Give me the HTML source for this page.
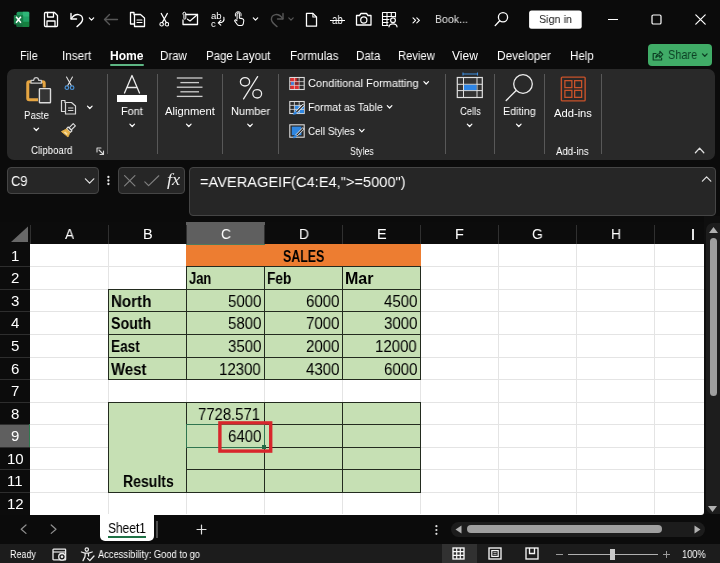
<!DOCTYPE html>
<html><head><meta charset="utf-8"><title>Excel</title>
<style>
html,body{margin:0;padding:0;}
html{width:720px;height:563px;overflow:hidden;background:#0b0b0b;}
body{width:720px;height:563px;overflow:hidden;background:#0b0b0b;position:relative;font-family:"Liberation Sans",sans-serif;}
.t{position:absolute;white-space:nowrap;transform-origin:0 50%;display:block;will-change:transform;}
.r{position:absolute;box-sizing:border-box;display:block;}
</style></head><body>
<div class="r" style="left:30px;top:244px;width:674px;height:271px;background:#ffffff;border-bottom-right-radius:3px;"></div>
<div class="r" style="left:108px;top:244px;width:1px;height:270px;background:#e4e4e4;"></div>
<div class="r" style="left:186px;top:244px;width:1px;height:270px;background:#e4e4e4;"></div>
<div class="r" style="left:264px;top:244px;width:1px;height:270px;background:#e4e4e4;"></div>
<div class="r" style="left:342px;top:244px;width:1px;height:270px;background:#e4e4e4;"></div>
<div class="r" style="left:420px;top:244px;width:1px;height:270px;background:#e4e4e4;"></div>
<div class="r" style="left:498px;top:244px;width:1px;height:270px;background:#e4e4e4;"></div>
<div class="r" style="left:576px;top:244px;width:1px;height:270px;background:#e4e4e4;"></div>
<div class="r" style="left:654px;top:244px;width:1px;height:270px;background:#e4e4e4;"></div>
<div class="r" style="left:30px;top:266px;width:674px;height:1px;background:#e4e4e4;"></div>
<div class="r" style="left:30px;top:289px;width:674px;height:1px;background:#e4e4e4;"></div>
<div class="r" style="left:30px;top:311px;width:674px;height:1px;background:#e4e4e4;"></div>
<div class="r" style="left:30px;top:334px;width:674px;height:1px;background:#e4e4e4;"></div>
<div class="r" style="left:30px;top:357px;width:674px;height:1px;background:#e4e4e4;"></div>
<div class="r" style="left:30px;top:379px;width:674px;height:1px;background:#e4e4e4;"></div>
<div class="r" style="left:30px;top:402px;width:674px;height:1px;background:#e4e4e4;"></div>
<div class="r" style="left:30px;top:424px;width:674px;height:1px;background:#e4e4e4;"></div>
<div class="r" style="left:30px;top:447px;width:674px;height:1px;background:#e4e4e4;"></div>
<div class="r" style="left:30px;top:469px;width:674px;height:1px;background:#e4e4e4;"></div>
<div class="r" style="left:30px;top:492px;width:674px;height:1px;background:#e4e4e4;"></div>
<div class="r" style="left:0px;top:222px;width:704px;height:22px;background:#0c0c0c;"></div>
<div class="r" style="left:0px;top:244px;width:30px;height:271px;background:#0c0c0c;"></div>
<div class="r" style="left:186px;top:222px;width:79px;height:22px;background:#5f5f5f;"></div>
<div class="r" style="left:0px;top:424px;width:30px;height:23px;background:#5f5f5f;"></div>
<div class="r" style="left:30px;top:225px;width:1px;height:19px;background:#303030;"></div>
<div class="r" style="left:108px;top:225px;width:1px;height:19px;background:#303030;"></div>
<div class="r" style="left:186px;top:225px;width:1px;height:19px;background:#303030;"></div>
<div class="r" style="left:264px;top:225px;width:1px;height:19px;background:#303030;"></div>
<div class="r" style="left:342px;top:225px;width:1px;height:19px;background:#303030;"></div>
<div class="r" style="left:420px;top:225px;width:1px;height:19px;background:#303030;"></div>
<div class="r" style="left:498px;top:225px;width:1px;height:19px;background:#303030;"></div>
<div class="r" style="left:576px;top:225px;width:1px;height:19px;background:#303030;"></div>
<div class="r" style="left:654px;top:225px;width:1px;height:19px;background:#303030;"></div>
<div class="r" style="left:0px;top:266px;width:30px;height:1px;background:#2e2e2e;"></div>
<div class="r" style="left:0px;top:289px;width:30px;height:1px;background:#2e2e2e;"></div>
<div class="r" style="left:0px;top:311px;width:30px;height:1px;background:#2e2e2e;"></div>
<div class="r" style="left:0px;top:334px;width:30px;height:1px;background:#2e2e2e;"></div>
<div class="r" style="left:0px;top:357px;width:30px;height:1px;background:#2e2e2e;"></div>
<div class="r" style="left:0px;top:379px;width:30px;height:1px;background:#2e2e2e;"></div>
<div class="r" style="left:0px;top:402px;width:30px;height:1px;background:#2e2e2e;"></div>
<div class="r" style="left:0px;top:424px;width:30px;height:1px;background:#2e2e2e;"></div>
<div class="r" style="left:0px;top:447px;width:30px;height:1px;background:#2e2e2e;"></div>
<div class="r" style="left:0px;top:469px;width:30px;height:1px;background:#2e2e2e;"></div>
<div class="r" style="left:0px;top:492px;width:30px;height:1px;background:#2e2e2e;"></div>
<div class="r" style="left:29px;top:424px;width:1px;height:23px;background:#2f7a50;"></div>
<svg class="r" style="left:10px;top:226px" width="19" height="17" viewBox="0 0 19 17"><path d="M18 0.5 L18 16 L1 16 Z" fill="#686868"/></svg>
<span class="t" style="left:64.91px;top:226.75px;font-size:14.5px;line-height:14.5px;color:#ffffff;transform:scaleX(0.9424);">A</span>
<span class="t" style="left:142.91px;top:226.75px;font-size:14.5px;line-height:14.5px;color:#ffffff;transform:scaleX(0.9546);">B</span>
<span class="t" style="left:220.53px;top:226.75px;font-size:14.5px;line-height:14.5px;color:#ffffff;transform:scaleX(0.9473);">C</span>
<span class="t" style="left:298.53px;top:226.75px;font-size:14.5px;line-height:14.5px;color:#ffffff;transform:scaleX(0.9473);">D</span>
<span class="t" style="left:376.91px;top:226.75px;font-size:14.5px;line-height:14.5px;color:#ffffff;transform:scaleX(0.9546);">E</span>
<span class="t" style="left:455.29px;top:226.75px;font-size:14.5px;line-height:14.5px;color:#ffffff;transform:scaleX(0.9481);">F</span>
<span class="t" style="left:532.14px;top:226.75px;font-size:14.5px;line-height:14.5px;color:#ffffff;transform:scaleX(0.9525);">G</span>
<span class="t" style="left:610.53px;top:226.75px;font-size:14.5px;line-height:14.5px;color:#ffffff;transform:scaleX(0.9473);">H</span>
<div class="r" style="left:692px;top:229px;width:2px;height:11px;background:#e4e4e4;"></div>
<span class="t" style="left:10.83px;top:248.00px;font-size:15px;line-height:15px;color:#ffffff;">1</span>
<span class="t" style="left:10.83px;top:270.00px;font-size:15px;line-height:15px;color:#ffffff;">2</span>
<span class="t" style="left:10.83px;top:293.00px;font-size:15px;line-height:15px;color:#ffffff;">3</span>
<span class="t" style="left:10.83px;top:315.00px;font-size:15px;line-height:15px;color:#ffffff;">4</span>
<span class="t" style="left:10.83px;top:338.00px;font-size:15px;line-height:15px;color:#ffffff;">5</span>
<span class="t" style="left:10.83px;top:361.00px;font-size:15px;line-height:15px;color:#ffffff;">6</span>
<span class="t" style="left:10.83px;top:383.00px;font-size:15px;line-height:15px;color:#ffffff;">7</span>
<span class="t" style="left:10.83px;top:406.00px;font-size:15px;line-height:15px;color:#ffffff;">8</span>
<span class="t" style="left:10.83px;top:428.00px;font-size:15px;line-height:15px;color:#ffffff;">9</span>
<span class="t" style="left:6.66px;top:451.00px;font-size:15px;line-height:15px;color:#ffffff;">10</span>
<span class="t" style="left:7.21px;top:473.00px;font-size:15px;line-height:15px;color:#ffffff;">11</span>
<span class="t" style="left:6.66px;top:496.00px;font-size:15px;line-height:15px;color:#ffffff;">12</span>
<div class="r" style="left:186px;top:244px;width:235px;height:22px;background:#ed7d31;"></div>
<div class="r" style="left:186px;top:244px;width:79px;height:1px;background:#4f7a5e;"></div>
<div class="r" style="left:186px;top:266px;width:79px;height:24px;background:#c6e0b4;border:1px solid #232b1f;"></div>
<div class="r" style="left:264px;top:266px;width:79px;height:24px;background:#c6e0b4;border:1px solid #232b1f;"></div>
<div class="r" style="left:342px;top:266px;width:79px;height:24px;background:#c6e0b4;border:1px solid #232b1f;"></div>
<div class="r" style="left:108px;top:289px;width:79px;height:23px;background:#c6e0b4;border:1px solid #232b1f;"></div>
<div class="r" style="left:186px;top:289px;width:79px;height:23px;background:#c6e0b4;border:1px solid #232b1f;"></div>
<div class="r" style="left:264px;top:289px;width:79px;height:23px;background:#c6e0b4;border:1px solid #232b1f;"></div>
<div class="r" style="left:342px;top:289px;width:79px;height:23px;background:#c6e0b4;border:1px solid #232b1f;"></div>
<div class="r" style="left:108px;top:311px;width:79px;height:24px;background:#c6e0b4;border:1px solid #232b1f;"></div>
<div class="r" style="left:186px;top:311px;width:79px;height:24px;background:#c6e0b4;border:1px solid #232b1f;"></div>
<div class="r" style="left:264px;top:311px;width:79px;height:24px;background:#c6e0b4;border:1px solid #232b1f;"></div>
<div class="r" style="left:342px;top:311px;width:79px;height:24px;background:#c6e0b4;border:1px solid #232b1f;"></div>
<div class="r" style="left:108px;top:334px;width:79px;height:24px;background:#c6e0b4;border:1px solid #232b1f;"></div>
<div class="r" style="left:186px;top:334px;width:79px;height:24px;background:#c6e0b4;border:1px solid #232b1f;"></div>
<div class="r" style="left:264px;top:334px;width:79px;height:24px;background:#c6e0b4;border:1px solid #232b1f;"></div>
<div class="r" style="left:342px;top:334px;width:79px;height:24px;background:#c6e0b4;border:1px solid #232b1f;"></div>
<div class="r" style="left:108px;top:357px;width:79px;height:23px;background:#c6e0b4;border:1px solid #232b1f;"></div>
<div class="r" style="left:186px;top:357px;width:79px;height:23px;background:#c6e0b4;border:1px solid #232b1f;"></div>
<div class="r" style="left:264px;top:357px;width:79px;height:23px;background:#c6e0b4;border:1px solid #232b1f;"></div>
<div class="r" style="left:342px;top:357px;width:79px;height:23px;background:#c6e0b4;border:1px solid #232b1f;"></div>
<div class="r" style="left:108px;top:402px;width:79px;height:91px;background:#c6e0b4;border:1px solid #232b1f;"></div>
<div class="r" style="left:186px;top:402px;width:79px;height:23px;background:#c6e0b4;border:1px solid #232b1f;"></div>
<div class="r" style="left:264px;top:402px;width:79px;height:23px;background:#c6e0b4;border:1px solid #232b1f;"></div>
<div class="r" style="left:342px;top:402px;width:79px;height:23px;background:#c6e0b4;border:1px solid #232b1f;"></div>
<div class="r" style="left:186px;top:424px;width:79px;height:24px;background:#c6e0b4;border:1px solid #232b1f;"></div>
<div class="r" style="left:264px;top:424px;width:79px;height:24px;background:#c6e0b4;border:1px solid #232b1f;"></div>
<div class="r" style="left:342px;top:424px;width:79px;height:24px;background:#c6e0b4;border:1px solid #232b1f;"></div>
<div class="r" style="left:186px;top:447px;width:79px;height:23px;background:#c6e0b4;border:1px solid #232b1f;"></div>
<div class="r" style="left:264px;top:447px;width:79px;height:23px;background:#c6e0b4;border:1px solid #232b1f;"></div>
<div class="r" style="left:342px;top:447px;width:79px;height:23px;background:#c6e0b4;border:1px solid #232b1f;"></div>
<div class="r" style="left:186px;top:469px;width:79px;height:24px;background:#c6e0b4;border:1px solid #232b1f;"></div>
<div class="r" style="left:264px;top:469px;width:79px;height:24px;background:#c6e0b4;border:1px solid #232b1f;"></div>
<div class="r" style="left:342px;top:469px;width:79px;height:24px;background:#c6e0b4;border:1px solid #232b1f;"></div>
<span class="t" style="left:283.00px;top:248.50px;font-size:16px;line-height:16px;color:#000;font-weight:bold;transform:scaleX(0.7738);">SALES</span>
<span class="t" style="left:189.20px;top:270.50px;font-size:16px;line-height:16px;color:#000;font-weight:bold;transform:scaleX(0.8072);">Jan</span>
<span class="t" style="left:267.20px;top:270.50px;font-size:16px;line-height:16px;color:#000;font-weight:bold;transform:scaleX(0.8526);">Feb</span>
<span class="t" style="left:345.20px;top:270.50px;font-size:16px;line-height:16px;color:#000;font-weight:bold;transform:scaleX(0.9930);">Mar</span>
<span class="t" style="left:111.30px;top:293.50px;font-size:16px;line-height:16px;color:#000;font-weight:bold;transform:scaleX(0.9455);">North</span>
<span class="t" style="left:111.30px;top:315.50px;font-size:16px;line-height:16px;color:#000;font-weight:bold;transform:scaleX(0.8882);">South</span>
<span class="t" style="left:111.30px;top:338.50px;font-size:16px;line-height:16px;color:#000;font-weight:bold;transform:scaleX(0.8504);">East</span>
<span class="t" style="left:111.30px;top:361.50px;font-size:16px;line-height:16px;color:#000;font-weight:bold;transform:scaleX(0.9342);">West</span>
<span class="t" style="left:227.80px;top:293.50px;font-size:16px;line-height:16px;color:#000;transform:scaleX(0.9375);">5000</span>
<span class="t" style="left:305.80px;top:293.50px;font-size:16px;line-height:16px;color:#000;transform:scaleX(0.9375);">6000</span>
<span class="t" style="left:383.80px;top:293.50px;font-size:16px;line-height:16px;color:#000;transform:scaleX(0.9375);">4500</span>
<span class="t" style="left:227.80px;top:315.50px;font-size:16px;line-height:16px;color:#000;transform:scaleX(0.9375);">5800</span>
<span class="t" style="left:305.80px;top:315.50px;font-size:16px;line-height:16px;color:#000;transform:scaleX(0.9375);">7000</span>
<span class="t" style="left:383.80px;top:315.50px;font-size:16px;line-height:16px;color:#000;transform:scaleX(0.9375);">3000</span>
<span class="t" style="left:227.80px;top:338.50px;font-size:16px;line-height:16px;color:#000;transform:scaleX(0.9375);">3500</span>
<span class="t" style="left:305.80px;top:338.50px;font-size:16px;line-height:16px;color:#000;transform:scaleX(0.9375);">2000</span>
<span class="t" style="left:375.45px;top:338.50px;font-size:16px;line-height:16px;color:#000;transform:scaleX(0.9382);">12000</span>
<span class="t" style="left:219.45px;top:361.50px;font-size:16px;line-height:16px;color:#000;transform:scaleX(0.9382);">12300</span>
<span class="t" style="left:305.80px;top:361.50px;font-size:16px;line-height:16px;color:#000;transform:scaleX(0.9375);">4300</span>
<span class="t" style="left:383.80px;top:361.50px;font-size:16px;line-height:16px;color:#000;transform:scaleX(0.9375);">6000</span>
<span class="t" style="left:198.20px;top:406.50px;font-size:16px;line-height:16px;color:#000;transform:scaleX(0.9288);">7728.571</span>
<span class="t" style="left:227.80px;top:428.50px;font-size:16px;line-height:16px;color:#000;transform:scaleX(0.9375);">6400</span>
<span class="t" style="left:122.50px;top:473.50px;font-size:16px;line-height:16px;color:#000;font-weight:bold;transform:scaleX(0.8779);">Results</span>
<div class="r" style="left:186px;top:424px;width:79px;height:24px;background:transparent;border:1px solid #2f7550;"></div>
<div class="r" style="left:262px;top:445px;width:4px;height:4px;background:#226b46;"></div>
<svg class="r" style="left:215px;top:418px" width="61" height="38" viewBox="0 0 61 38"><rect x="4.9" y="4.9" width="50.8" height="28.2" fill="none" stroke="#d8262c" stroke-width="3.4"/></svg>
<div class="r" style="left:704px;top:216px;width:16px;height:298px;background:#0f0f0f;"></div>
<div class="r" style="left:706px;top:223px;width:14px;height:291px;background:#1d1d1d;border-radius:7px 0 0 7px;"></div>
<svg class="r" style="left:709px;top:227px" width="9" height="6" viewBox="0 0 9 6"><path d="M4.5 0 L9 6 L0 6 Z" fill="#b0b0b0"/></svg>
<svg class="r" style="left:707.5px;top:506px" width="9" height="6" viewBox="0 0 9 6"><path d="M0 0 L9 0 L4.5 6 Z" fill="#b0b0b0"/></svg>
<div class="r" style="left:710px;top:238px;width:7px;height:158px;background:#9f9f9f;border-radius:4px;"></div>
<svg class="r" style="left:13px;top:11px" width="17" height="17" viewBox="0 0 17 17"><rect x="3.6" y="0.8" width="12.6" height="15.2" rx="1.5" fill="#1f9a5e"/>
<rect x="9.8" y="0.8" width="6.4" height="5" fill="#2fb678"/><rect x="9.8" y="5.8" width="6.4" height="5" fill="#21a366"/><rect x="9.8" y="10.8" width="6.4" height="5.2" fill="#15803f"/>
<rect x="3.6" y="10.8" width="6.2" height="5.2" fill="#176a3d"/>
<rect x="0.8" y="4" width="9.4" height="9.5" rx="1" fill="#187c47"/>
<path d="M3.1 5.8 L7.9 11.7 M7.9 5.8 L3.1 11.7" stroke="#fff" stroke-width="1.5" fill="none"/></svg>
<svg class="r" style="left:42.5px;top:11px" width="16" height="17" viewBox="0 0 16 17"><path d="M1.5 2.5 Q1.5 1.5 2.5 1.5 L11.5 1.5 L14.5 4.5 L14.5 14.5 Q14.5 15.5 13.5 15.5 L2.5 15.5 Q1.5 15.5 1.5 14.5 Z" fill="none" stroke="#ffffff" stroke-width="1.3" stroke-linecap="round" stroke-linejoin="round" /><path d="M4.5 1.5 L4.5 6 L10.5 6 L10.5 1.5" fill="none" stroke="#ffffff" stroke-width="1.3" stroke-linecap="round" stroke-linejoin="round" /><path d="M4 15.5 L4 10 L12 10 L12 15.5" fill="none" stroke="#ffffff" stroke-width="1.3" stroke-linecap="round" stroke-linejoin="round" /></svg>
<svg class="r" style="left:69px;top:11px" width="16" height="17" viewBox="0 0 16 17"><path d="M2 2.5 L2 8 L7.5 8" fill="none" stroke="#ffffff" stroke-width="1.4" stroke-linecap="round" stroke-linejoin="round" /><path d="M2.3 7.6 Q5.5 3 9.5 3.6 Q13.6 4.4 13.6 8.4 Q13.4 11.5 8 15.6" fill="none" stroke="#ffffff" stroke-width="1.4" stroke-linecap="round" stroke-linejoin="round" /></svg>
<svg class="r" style="left:0;top:0" width="720" height="563"><path d="M89.3 17.85 L91.5 20.15 L93.7 17.85" fill="none" stroke="#ffffff" stroke-width="1.2" stroke-linecap="round" stroke-linejoin="round"/></svg>
<svg class="r" style="left:103px;top:11px" width="16" height="17" viewBox="0 0 16 17"><path d="M14.5 8.5 L1.5 8.5 M6.5 3.5 L1.5 8.5 L6.5 13.5" fill="none" stroke="#575757" stroke-width="1.4" stroke-linecap="round" stroke-linejoin="round" /></svg>
<svg class="r" style="left:129px;top:11px" width="17" height="17" viewBox="0 0 17 17"><path d="M5 3.5 L5 1.5 L1.5 1.5 L1.5 13 L5 13" fill="none" stroke="#ffffff" stroke-width="1.3" stroke-linecap="round" stroke-linejoin="round" /><path d="M5.5 3.5 L11.5 3.5 L15.5 7 L15.5 15.5 L5.5 15.5 Z" fill="none" stroke="#ffffff" stroke-width="1.3" stroke-linecap="round" stroke-linejoin="round" /><path d="M8 9 L13 9 M8 11.5 L13 11.5" fill="none" stroke="#ffffff" stroke-width="1.1" stroke-linecap="round" stroke-linejoin="round" /></svg>
<svg class="r" style="left:158.8px;top:11.5px" width="10.6" height="16" viewBox="0 0 12 17"><path d="M2.5 1 L8.3 11.5 M9.5 1 L3.7 11.5" fill="none" stroke="#ffffff" stroke-width="1.3" stroke-linecap="round" stroke-linejoin="round" /><circle cx="3" cy="13.3" r="2" fill="none" stroke="#ffffff" stroke-width="1.2"/><circle cx="9" cy="13.3" r="2" fill="none" stroke="#ffffff" stroke-width="1.2"/></svg>
<svg class="r" style="left:181px;top:11px" width="18" height="17" viewBox="0 0 18 17"><path d="M5 3.5 L16.5 3.5 L16.5 13.5 L2 13.5 L2 9" fill="none" stroke="#ffffff" stroke-width="1.3" stroke-linecap="round" stroke-linejoin="round" /><path d="M16.5 3.5 L9 10 L6.5 8.2" fill="none" stroke="#ffffff" stroke-width="1.2" stroke-linecap="round" stroke-linejoin="round" /><path d="M1.8 3 Q1.8 1.2 3.3 1.2 Q4.8 1.2 4.8 3 L4.8 7.2 Q4.8 8.2 3.8 8.2 Q2.9 8.2 2.9 7.2 L2.9 3.5" fill="none" stroke="#ffffff" stroke-width="1.0" stroke-linecap="round" stroke-linejoin="round" /></svg>
<span class="t" style="left:211.30px;top:10.75px;font-size:9.5px;line-height:9.5px;color:#ffffff;transform:scaleX(1.0071);">ab</span>
<span class="t" style="left:211.30px;top:18.75px;font-size:9.5px;line-height:9.5px;color:#ffffff;transform:scaleX(0.9053);">c</span>
<svg class="r" style="left:214px;top:14px" width="12" height="14" viewBox="0 0 12 14"><path d="M9.8 3.2 Q11.3 8.6 4.6 8.8 M6.8 6.4 L4.2 8.8 L6.8 11.2" fill="none" stroke="#ffffff" stroke-width="1.1" stroke-linecap="round" stroke-linejoin="round" /></svg>
<svg class="r" style="left:233.2px;top:11.2px" width="12.4" height="16" viewBox="0 0 14 18"><path d="M4.6 9 L4.6 3.4 Q4.6 2 5.9 2 Q7.2 2 7.2 3.4 L7.2 8 L10.5 8.6 Q12.3 9 12.2 10.8 L11.6 14.5 Q11.3 16.3 9.6 16.3 L6.8 16.3 Q5.6 16.3 4.8 15.2 L2 11.4 Q1.6 10.4 2.6 10 Q3.5 9.8 4.6 11" fill="none" stroke="#ffffff" stroke-width="1.2" stroke-linecap="round" stroke-linejoin="round" /><path d="M2.7 5.6 Q2 2.6 4 1.2 Q5.9 0.3 7.8 1.2 Q9.8 2.6 9.1 5.6" fill="none" stroke="#ffffff" stroke-width="1.1" stroke-linecap="round" stroke-linejoin="round" /></svg>
<svg class="r" style="left:0;top:0" width="720" height="563"><path d="M253.3 17.85 L255.5 20.15 L257.7 17.85" fill="none" stroke="#ffffff" stroke-width="1.2" stroke-linecap="round" stroke-linejoin="round"/></svg>
<svg class="r" style="left:269px;top:11px" width="16" height="17" viewBox="0 0 16 17"><path d="M14 2.5 L14 8 L8.5 8" fill="none" stroke="#575757" stroke-width="1.4" stroke-linecap="round" stroke-linejoin="round" /><path d="M13.7 7.6 Q10.5 3 6.5 3.6 Q2.4 4.4 2.4 8.4 Q2.6 11.5 8 15.6" fill="none" stroke="#575757" stroke-width="1.4" stroke-linecap="round" stroke-linejoin="round" /></svg>
<svg class="r" style="left:0;top:0" width="720" height="563"><path d="M288.8 17.85 L291 20.15 L293.2 17.85" fill="none" stroke="#575757" stroke-width="1.2" stroke-linecap="round" stroke-linejoin="round"/></svg>
<svg class="r" style="left:304.5px;top:12px" width="13" height="15.5" viewBox="0 0 14 17"><path d="M1.5 1.5 L8.5 1.5 L12.5 5.5 L12.5 15.5 L1.5 15.5 Z" fill="none" stroke="#ffffff" stroke-width="1.4" stroke-linecap="round" stroke-linejoin="round" /><path d="M8.5 1.5 L8.5 5.5 L12.5 5.5" fill="none" stroke="#ffffff" stroke-width="1.2" stroke-linecap="round" stroke-linejoin="round" /></svg>
<span class="t" style="left:331.80px;top:12.75px;font-size:13.5px;line-height:13.5px;color:#ffffff;transform:scaleX(0.7200);">ab</span>
<div class="r" style="left:329.5px;top:20px;width:15.5px;height:1px;background:#ffffff;"></div>
<svg class="r" style="left:355px;top:11px" width="18" height="16" viewBox="0 0 18 16"><path d="M1.5 4.5 L4.5 4.5 L6 2.5 L11.5 2.5 L13 4.5 L16 4.5 L16 14 L1.5 14 Z" fill="none" stroke="#ffffff" stroke-width="1.3" stroke-linecap="round" stroke-linejoin="round" /><circle cx="8.8" cy="9" r="3.1" fill="none" stroke="#ffffff" stroke-width="1.2"/></svg>
<svg class="r" style="left:381px;top:11px" width="18" height="17" viewBox="0 0 18 17"><path d="M1.5 1.5 L14.5 1.5 L14.5 6 M1.5 1.5 L1.5 14.5 L7 14.5 M1.5 5.5 L14.5 5.5 M1.5 8.5 L8 8.5 M1.5 11.5 L7 11.5 M6 1.5 L6 14.5 M10.3 1.5 L10.3 5.5" fill="none" stroke="#ffffff" stroke-width="1.1" stroke-linecap="round" stroke-linejoin="round" /><circle cx="12" cy="9.3" r="2.4" fill="none" stroke="#ffffff" stroke-width="1.2"/><path d="M8 15.8 Q8.3 12.8 12 12.8 Q15.7 12.8 16 15.8" fill="none" stroke="#ffffff" stroke-width="1.2" stroke-linecap="round" stroke-linejoin="round" /></svg>
<svg class="r" style="left:412px;top:16.5px" width="9" height="7" viewBox="0 0 9 7"><path d="M1 0.8 L3.6 3.3 L1 5.8 M4.8 0.8 L7.4 3.3 L4.8 5.8" fill="none" stroke="#ffffff" stroke-width="1.1" stroke-linecap="round" stroke-linejoin="round" /></svg>
<span class="t" style="left:434.50px;top:14.10px;font-size:11.8px;line-height:11.8px;color:#e4e4e4;transform:scaleX(0.8956);">Book...</span>
<svg class="r" style="left:494px;top:11px" width="15" height="16" viewBox="0 0 15 16"><circle cx="9" cy="6.2" r="4.6" fill="none" stroke="#ffffff" stroke-width="1.3"/><path d="M5.7 9.7 L1.2 14.6" fill="none" stroke="#ffffff" stroke-width="1.4" stroke-linecap="round" stroke-linejoin="round" /></svg>
<svg class="r" style="left:525px;top:8px" width="62" height="24" viewBox="0 0 62 24"><rect x="4.1" y="2.4" width="52.6" height="18.3" rx="2.5" fill="#ffffff"/></svg>
<span class="t" style="left:538.90px;top:14.10px;font-size:11.8px;line-height:11.8px;color:#1a1a1a;transform:scaleX(0.9143);">Sign in</span>
<div class="r" style="left:607.5px;top:18.5px;width:10.5px;height:1px;background:#ffffff;"></div>
<svg class="r" style="left:651px;top:14px" width="11" height="11" viewBox="0 0 11 11"><rect x="1" y="1" width="9" height="9" rx="1.3" fill="none" stroke="#ffffff" stroke-width="1.2"/></svg>
<svg class="r" style="left:695px;top:14px" width="11" height="11" viewBox="0 0 11 11"><path d="M0.8 0.8 L10.2 10.2 M10.2 0.8 L0.8 10.2" fill="none" stroke="#ffffff" stroke-width="1.2" stroke-linecap="round" stroke-linejoin="round" /></svg>
<span class="t" style="left:19.50px;top:50.00px;font-size:12px;line-height:12px;color:#ffffff;transform:scaleX(0.9135);">File</span>
<span class="t" style="left:62.00px;top:50.00px;font-size:12px;line-height:12px;color:#ffffff;transform:scaleX(0.9733);">Insert</span>
<span class="t" style="left:160.00px;top:50.00px;font-size:12px;line-height:12px;color:#ffffff;transform:scaleX(0.9600);">Draw</span>
<span class="t" style="left:205.50px;top:50.00px;font-size:12px;line-height:12px;color:#ffffff;transform:scaleX(0.9573);">Page Layout</span>
<span class="t" style="left:289.50px;top:50.00px;font-size:12px;line-height:12px;color:#ffffff;transform:scaleX(0.9700);">Formulas</span>
<span class="t" style="left:355.60px;top:50.00px;font-size:12px;line-height:12px;color:#ffffff;transform:scaleX(0.9616);">Data</span>
<span class="t" style="left:397.60px;top:50.00px;font-size:12px;line-height:12px;color:#ffffff;transform:scaleX(0.9346);">Review</span>
<span class="t" style="left:452.00px;top:50.00px;font-size:12px;line-height:12px;color:#ffffff;">View</span>
<span class="t" style="left:496.50px;top:50.00px;font-size:12px;line-height:12px;color:#ffffff;transform:scaleX(0.9863);">Developer</span>
<span class="t" style="left:569.50px;top:50.00px;font-size:12px;line-height:12px;color:#ffffff;transform:scaleX(0.9624);">Help</span>
<span class="t" style="left:109.60px;top:50.00px;font-size:12px;line-height:12px;color:#ffffff;font-weight:bold;transform:scaleX(1.0067);">Home</span>
<div class="r" style="left:109.5px;top:64px;width:34.5px;height:2px;background:#5db583;border-radius:1px;"></div>
<div class="r" style="left:648px;top:44px;width:63.5px;height:22px;background:#40ac67;border-radius:4px;"></div>
<svg class="r" style="left:651.5px;top:49.5px" width="12" height="11" viewBox="0 0 12 11"><path d="M4 3.5 L1.2 3.5 L1.2 10 L9.6 10 L9.6 8" fill="none" stroke="#0c3f24" stroke-width="1.2" stroke-linecap="round" stroke-linejoin="round" /><path d="M3.8 7.6 Q4.2 4 7.8 3.8 L7.8 1.2 L10.8 4.4 L7.8 7.6 L7.8 5.6 Q5 5.6 3.8 7.6 Z" fill="none" stroke="#0c3f24" stroke-width="1.1" stroke-linecap="round" stroke-linejoin="round" /></svg>
<span class="t" style="left:667.60px;top:48.80px;font-size:12.4px;line-height:12.4px;color:#0c3f24;transform:scaleX(0.8818);">Share</span>
<svg class="r" style="left:0;top:0" width="720" height="563"><path d="M702.5 53.9 L704.8 56.300000000000004 L707.0999999999999 53.9" fill="none" stroke="#0c3f24" stroke-width="1.3" stroke-linecap="round" stroke-linejoin="round"/></svg>
<div class="r" style="left:7px;top:69px;width:708px;height:91px;background:#292929;border-radius:7px;"></div>
<div class="r" style="left:107px;top:74px;width:1px;height:80px;background:#585858;"></div>
<div class="r" style="left:157px;top:74px;width:1px;height:80px;background:#585858;"></div>
<div class="r" style="left:222px;top:74px;width:1px;height:80px;background:#585858;"></div>
<div class="r" style="left:278px;top:74px;width:1px;height:80px;background:#585858;"></div>
<div class="r" style="left:445px;top:74px;width:1px;height:80px;background:#585858;"></div>
<div class="r" style="left:494px;top:74px;width:1px;height:80px;background:#585858;"></div>
<div class="r" style="left:544px;top:74px;width:1px;height:80px;background:#585858;"></div>
<div class="r" style="left:601px;top:74px;width:1px;height:80px;background:#585858;"></div>
<svg class="r" style="left:24px;top:75px" width="30" height="31" viewBox="0 0 30 31"><path d="M9 6.7 L5.2 6.7 Q3.75 6.7 3.75 8.2 L3.75 23.3 Q3.75 24.8 5.2 24.8 L14 24.8" fill="none" stroke="#e5a542" stroke-width="3"/>
<path d="M15.5 6.7 L18.8 6.7 Q20.2 6.7 20.2 8.2 L20.2 12.5" fill="none" stroke="#e5a542" stroke-width="3"/>
<path d="M7 8.2 L7 5.4 L9.6 5.4 Q10 2.6 12.2 2.6 Q14.4 2.6 14.8 5.4 L17.4 5.4 L17.4 8.2 Z" fill="#292929" stroke="#c8c8c8" stroke-width="1.3" stroke-linejoin="round"/>
<rect x="15.4" y="13.6" width="11.1" height="14.2" rx="0.6" fill="#343434" stroke="#dcdcdc" stroke-width="1.4"/></svg>
<span class="t" style="left:24.30px;top:110.40px;font-size:11.2px;line-height:11.2px;color:#ffffff;transform:scaleX(0.8696);">Paste</span>
<svg class="r" style="left:0;top:0" width="720" height="563"><path d="M34.0 128.10000000000002 L36.3 130.5 L38.599999999999994 128.10000000000002" fill="none" stroke="#ffffff" stroke-width="1.2" stroke-linecap="round" stroke-linejoin="round"/></svg>
<svg class="r" style="left:63.5px;top:76px" width="11" height="15.5" viewBox="0 0 13 18"><path d="M3 1 L8.6 11 M10 1 L4.4 11" fill="none" stroke="#e0e0e0" stroke-width="1.3" stroke-linecap="round" stroke-linejoin="round" /><circle cx="3.4" cy="13.6" r="2.1" fill="none" stroke="#4a92d6" stroke-width="1.4"/><circle cx="9.6" cy="13.6" r="2.1" fill="none" stroke="#4a92d6" stroke-width="1.4"/></svg>
<svg class="r" style="left:60px;top:99px" width="18" height="17" viewBox="0 0 18 17"><path d="M5 3.5 L5 1.5 L1.5 1.5 L1.5 12.5 L5 12.5" fill="none" stroke="#d8d8d8" stroke-width="1.2" stroke-linecap="round" stroke-linejoin="round" /><path d="M5.5 3.5 L11.5 3.5 L15.5 7 L15.5 15 L5.5 15 Z" fill="none" stroke="#d8d8d8" stroke-width="1.2" stroke-linecap="round" stroke-linejoin="round" /><path d="M8.5 9 L13 9 M8.5 11.5 L13 11.5" fill="none" stroke="#d8d8d8" stroke-width="1.0" stroke-linecap="round" stroke-linejoin="round" /></svg>
<svg class="r" style="left:0;top:0" width="720" height="563"><path d="M87.5 106.1 L89.8 108.5 L92.1 106.1" fill="none" stroke="#ffffff" stroke-width="1.2" stroke-linecap="round" stroke-linejoin="round"/></svg>
<svg class="r" style="left:60px;top:122px" width="18" height="17" viewBox="0 0 18 17"><path d="M13.2 1.6 L15.4 3.8 L11.2 8 L9 5.8 Z" fill="#292929" stroke="#e0e0e0" stroke-width="1.1" stroke-linejoin="round"/>
<path d="M8.2 5 L12 8.8 L10.4 10.4 L6.6 6.6 Z" fill="#292929" stroke="#e0e0e0" stroke-width="1.1" stroke-linejoin="round"/>
<path d="M6.4 7 L10 10.6 L8 15 L1.4 9.6 Z" fill="#e9b44c" stroke="#e9b44c" stroke-width="0.8" stroke-linejoin="round"/>
<path d="M5.2 9.6 L7.6 11.8 L6.6 13 L3.8 10.4 Z" fill="#f7dfa6"/></svg>
<span class="t" style="left:30.50px;top:145.25px;font-size:11.5px;line-height:11.5px;color:#ffffff;transform:scaleX(0.8426);">Clipboard</span>
<svg class="r" style="left:96px;top:147px" width="9" height="9" viewBox="0 0 9 9"><path d="M1 5 L1 1 L5 1" fill="none" stroke="#d8d8d8" stroke-width="1.1" stroke-linecap="round" stroke-linejoin="round" /><path d="M3 3 L7.5 7.5 M7.5 4 L7.5 7.5 L4 7.5" fill="none" stroke="#d8d8d8" stroke-width="1.1" stroke-linecap="round" stroke-linejoin="round" /></svg>
<svg class="r" style="left:120px;top:74px" width="24" height="21" viewBox="0 0 24 21"><path d="M4.5 19 L12 1.5 L19.5 19 M7 13.5 L17 13.5" fill="none" stroke="#ececec" stroke-width="1.3" stroke-linecap="round" stroke-linejoin="round" /></svg>
<div class="r" style="left:117px;top:95px;width:30px;height:7px;background:#ffffff;"></div>
<span class="t" style="left:121.30px;top:106.40px;font-size:11.2px;line-height:11.2px;color:#ffffff;transform:scaleX(0.9733);">Font</span>
<svg class="r" style="left:0;top:0" width="720" height="563"><path d="M129.89999999999998 124.1 L132.2 126.5 L134.5 124.1" fill="none" stroke="#ffffff" stroke-width="1.2" stroke-linecap="round" stroke-linejoin="round"/></svg>
<svg class="r" style="left:170px;top:72px" width="40" height="30" viewBox="0 0 40 30"><rect x="6.800000000000011" y="5.35" width="25.69999999999999" height="1.3" fill="#cdcdcd"/><rect x="10.400000000000006" y="9.95" width="18.599999999999994" height="1.3" fill="#cdcdcd"/><rect x="6.800000000000011" y="14.55" width="25.69999999999999" height="1.3" fill="#cdcdcd"/><rect x="10.400000000000006" y="19.15" width="18.599999999999994" height="1.3" fill="#cdcdcd"/><rect x="6.800000000000011" y="23.75" width="25.69999999999999" height="1.3" fill="#cdcdcd"/></svg>
<span class="t" style="left:165.00px;top:106.40px;font-size:11.2px;line-height:11.2px;color:#ffffff;transform:scaleX(0.9920);">Alignment</span>
<svg class="r" style="left:0;top:0" width="720" height="563"><path d="M186.5 124.1 L188.8 126.5 L191.10000000000002 124.1" fill="none" stroke="#ffffff" stroke-width="1.2" stroke-linecap="round" stroke-linejoin="round"/></svg>
<svg class="r" style="left:237px;top:75px" width="27" height="25" viewBox="0 0 27 25"><ellipse cx="8" cy="6.8" rx="4.6" ry="4.2" fill="none" stroke="#ececec" stroke-width="1.3"/><ellipse cx="20.2" cy="18.8" rx="4.4" ry="4.2" fill="none" stroke="#ececec" stroke-width="1.3"/><path d="M20.6 1.6 L6.6 23.9" fill="none" stroke="#ececec" stroke-width="1.3" stroke-linecap="round" stroke-linejoin="round" /></svg>
<span class="t" style="left:230.60px;top:106.40px;font-size:11.2px;line-height:11.2px;color:#ffffff;transform:scaleX(0.9850);">Number</span>
<svg class="r" style="left:0;top:0" width="720" height="563"><path d="M247.7 124.1 L250 126.5 L252.3 124.1" fill="none" stroke="#ffffff" stroke-width="1.2" stroke-linecap="round" stroke-linejoin="round"/></svg>
<svg class="r" style="left:289px;top:76px" width="17" height="15" viewBox="0 0 17 15"><rect x="0.8" y="1.5" width="14.4" height="12" fill="#2a2a2a" stroke="#dcdcdc" stroke-width="1.1"/>
<rect x="1.4" y="2" width="8.6" height="11" fill="#de2f2f"/>
<rect x="2" y="5.8" width="3.2" height="3.4" fill="#3f7fd8"/><rect x="5.6" y="5.8" width="4.4" height="3.4" fill="#8a2626"/>
<rect x="7.6" y="2.2" width="2.6" height="3.2" fill="#4a3030"/>
<path d="M5.4 1.5 L5.4 13.5 M10.2 1.5 L10.2 13.5 M0.8 5.6 L15.2 5.6 M0.8 9.4 L15.2 9.4" stroke="#dcdcdc" stroke-width="0.7" fill="none"/></svg>
<svg class="r" style="left:289px;top:100px" width="17" height="15" viewBox="0 0 17 15"><rect x="0.8" y="1.5" width="14.4" height="12" fill="#2a2a2a" stroke="#dcdcdc" stroke-width="1.1"/>
<rect x="5.6" y="5.4" width="9.4" height="7.8" fill="#2f86e0"/>
<path d="M5.4 1.5 L5.4 13.5 M10.2 1.5 L10.2 13.5 M0.8 5.4 L15.2 5.4 M0.8 9.4 L15.2 9.4" stroke="#dcdcdc" stroke-width="0.8" fill="none"/>
<path d="M6.6 11.6 L13.8 4.2 L15.2 5.6 L8 12.8 Z" fill="#2a2a2a" stroke="#f0f0f0" stroke-width="0.9" stroke-linejoin="round"/>
<path d="M4.2 14.6 Q4.6 12 6.6 11.6 L8 12.8 Q7 14.6 4.2 14.6 Z" fill="#2f86e0" stroke="#2f86e0" stroke-width="0.5"/></svg>
<svg class="r" style="left:289px;top:123px" width="17" height="16" viewBox="0 0 17 16"><rect x="0.8" y="1.8" width="14.4" height="12.4" fill="#2a2a2a" stroke="#dcdcdc" stroke-width="1.1"/>
<rect x="2.8" y="3.6" width="9.6" height="8.6" fill="#2f86e0"/>
<path d="M6.6 12 L13.8 4.6 L15.2 6 L8 13.2 Z" fill="#2a2a2a" stroke="#f0f0f0" stroke-width="0.9" stroke-linejoin="round"/>
<path d="M4.2 15 Q4.6 12.4 6.6 12 L8 13.2 Q7 15 4.2 15 Z" fill="#2f86e0" stroke="#2f86e0" stroke-width="0.5"/></svg>
<span class="t" style="left:308.00px;top:78.40px;font-size:11.2px;line-height:11.2px;color:#ffffff;transform:scaleX(0.9839);">Conditional Formatting</span>
<svg class="r" style="left:0;top:0" width="720" height="563"><path d="M423.9 81.6 L426.2 84.0 L428.5 81.6" fill="none" stroke="#ffffff" stroke-width="1.2" stroke-linecap="round" stroke-linejoin="round"/></svg>
<span class="t" style="left:308.00px;top:102.40px;font-size:11.2px;line-height:11.2px;color:#ffffff;transform:scaleX(0.9354);">Format as Table</span>
<svg class="r" style="left:0;top:0" width="720" height="563"><path d="M387.3 105.6 L389.6 108.0 L391.90000000000003 105.6" fill="none" stroke="#ffffff" stroke-width="1.2" stroke-linecap="round" stroke-linejoin="round"/></svg>
<span class="t" style="left:308.00px;top:126.40px;font-size:11.2px;line-height:11.2px;color:#ffffff;transform:scaleX(0.8847);">Cell Styles</span>
<svg class="r" style="left:0;top:0" width="720" height="563"><path d="M359.5 129.4 L361.8 131.79999999999998 L364.1 129.4" fill="none" stroke="#ffffff" stroke-width="1.2" stroke-linecap="round" stroke-linejoin="round"/></svg>
<span class="t" style="left:349.60px;top:146.25px;font-size:11.5px;line-height:11.5px;color:#ffffff;transform:scaleX(0.7554);">Styles</span>
<svg class="r" style="left:456px;top:72px" width="28" height="27" viewBox="0 0 28 27"><path d="M7 2 L21.5 2 M7 0.5 L7 3.5 M21.5 0.5 L21.5 3.5" stroke="#3f8fe0" stroke-width="1.1" fill="none"/>
<rect x="1.3" y="5.5" width="25" height="20" fill="#333" stroke="#e0e0e0" stroke-width="1.2"/>
<path d="M7.5 5.5 L7.5 25.5 M21 5.5 L21 25.5 M1.3 12.3 L26.3 12.3 M1.3 18.6 L26.3 18.6" stroke="#e0e0e0" stroke-width="1" fill="none"/>
<rect x="8" y="12.8" width="12.5" height="5.3" fill="#2f86e6"/></svg>
<span class="t" style="left:459.60px;top:106.40px;font-size:11.2px;line-height:11.2px;color:#ffffff;transform:scaleX(0.8400);">Cells</span>
<svg class="r" style="left:0;top:0" width="720" height="563"><path d="M467.3 124.1 L469.6 126.5 L471.90000000000003 124.1" fill="none" stroke="#ffffff" stroke-width="1.2" stroke-linecap="round" stroke-linejoin="round"/></svg>
<svg class="r" style="left:504px;top:72px" width="32" height="32" viewBox="0 0 32 32"><circle cx="19" cy="12" r="9.3" fill="none" stroke="#ececec" stroke-width="1.3"/><path d="M12.2 18.6 L2.2 28.4" fill="none" stroke="#ececec" stroke-width="1.4" stroke-linecap="round" stroke-linejoin="round" /></svg>
<span class="t" style="left:502.60px;top:106.40px;font-size:11.2px;line-height:11.2px;color:#ffffff;transform:scaleX(0.9571);">Editing</span>
<svg class="r" style="left:0;top:0" width="720" height="563"><path d="M516.5 124.1 L518.8 126.5 L521.0999999999999 124.1" fill="none" stroke="#ffffff" stroke-width="1.2" stroke-linecap="round" stroke-linejoin="round"/></svg>
<svg class="r" style="left:560px;top:76px" width="26.5" height="26" viewBox="0 0 28 28"><rect x="1.2" y="1.2" width="25.6" height="25.6" rx="1" fill="none" stroke="#c8522a" stroke-width="1.5"/>
<rect x="5" y="5" width="7.5" height="7.5" fill="none" stroke="#c8522a" stroke-width="1.4"/><rect x="15.5" y="5" width="7.5" height="7.5" fill="none" stroke="#c8522a" stroke-width="1.4"/>
<rect x="5" y="15.5" width="7.5" height="7.5" fill="none" stroke="#c8522a" stroke-width="1.4"/><rect x="15.5" y="15.5" width="7.5" height="7.5" fill="none" stroke="#c8522a" stroke-width="1.4"/></svg>
<span class="t" style="left:553.80px;top:108.40px;font-size:11.2px;line-height:11.2px;color:#ffffff;">Add-ins</span>
<span class="t" style="left:556.20px;top:146.25px;font-size:11.5px;line-height:11.5px;color:#ffffff;transform:scaleX(0.8359);">Add-ins</span>
<svg class="r" style="left:0;top:0" width="720" height="563"><path d="M695.4 152.70000000000002 L699.6 148.1 L703.8000000000001 152.70000000000002" fill="none" stroke="#e0e0e0" stroke-width="1.3" stroke-linecap="round" stroke-linejoin="round"/></svg>
<div class="r" style="left:7px;top:167px;width:92px;height:27px;background:#262626;border:1px solid #454545;border-radius:4px;"></div>
<span class="t" style="left:11.30px;top:173.00px;font-size:15px;line-height:15px;color:#ffffff;transform:scaleX(0.8627);">C9</span>
<svg class="r" style="left:0;top:0" width="720" height="563"><path d="M85.39999999999999 178.8 L89.6 183.2 L93.8 178.8" fill="none" stroke="#e0e0e0" stroke-width="1.2" stroke-linecap="round" stroke-linejoin="round"/></svg>
<svg class="r" style="left:106px;top:174px" width="5" height="13" viewBox="0 0 5 13"><circle cx="2.4" cy="3" r="1.15" fill="#e6e6e6"/><circle cx="2.4" cy="6.5" r="1.15" fill="#e6e6e6"/><circle cx="2.4" cy="10" r="1.15" fill="#e6e6e6"/></svg>
<div class="r" style="left:118px;top:167px;width:67px;height:27px;background:#262626;border:1px solid #454545;border-radius:4px;"></div>
<svg class="r" style="left:123.5px;top:174.8px" width="12" height="12" viewBox="0 0 12 12"><path d="M0.6 0.6 L10.9 10.9 M10.9 0.6 L0.6 10.9" fill="none" stroke="#7e7e7e" stroke-width="1.2" stroke-linecap="round" stroke-linejoin="round" /></svg>
<svg class="r" style="left:143.5px;top:174.5px" width="16" height="12" viewBox="0 0 16 12"><path d="M0.8 6.8 L4.6 10.6 L14.8 0.8" fill="none" stroke="#7e7e7e" stroke-width="1.2" stroke-linecap="round" stroke-linejoin="round" /></svg>
<span class="t" style="left:167.00px;top:171.75px;font-size:16.5px;line-height:16.5px;color:#ececec;font-style:italic;font-family:'Liberation Serif',serif;transform:scaleX(1.1116);">fx</span>
<div class="r" style="left:189px;top:167px;width:527px;height:49px;background:#262626;border:1px solid #454545;border-radius:4px;"></div>
<span class="t" style="left:200.00px;top:173.75px;font-size:15.5px;line-height:15.5px;color:#ffffff;transform:scaleX(0.9432);">=AVERAGEIF(C4:E4,"&gt;=5000")</span>
<svg class="r" style="left:0;top:0" width="720" height="563"><path d="M702.4 181.2 L706.6 176.8 L710.8000000000001 181.2" fill="none" stroke="#e0e0e0" stroke-width="1.2" stroke-linecap="round" stroke-linejoin="round"/></svg>
<div class="r" style="left:0px;top:515px;width:100px;height:29px;background:#0b0b0b;border-top-right-radius:3px;"></div>
<div class="r" style="left:154px;top:515px;width:566px;height:29px;background:#0b0b0b;border-top-left-radius:3px;"></div>
<div class="r" style="left:100px;top:541px;width:54px;height:3px;background:#0b0b0b;"></div>
<div class="r" style="left:96px;top:520px;width:62px;height:24px;background:#0b0b0b;"></div>
<svg class="r" style="left:19.5px;top:523.5px" width="8" height="11" viewBox="0 0 8 11"><path d="M6 1 L1.2 5.2 L6 9.4" fill="none" stroke="#909090" stroke-width="1.2" stroke-linecap="round" stroke-linejoin="round" /></svg>
<svg class="r" style="left:50px;top:523.5px" width="8" height="11" viewBox="0 0 8 11"><path d="M1.2 1 L6 5.2 L1.2 9.4" fill="none" stroke="#909090" stroke-width="1.2" stroke-linecap="round" stroke-linejoin="round" /></svg>
<div class="r" style="left:100px;top:514px;width:54px;height:27px;background:#ffffff;border-radius:0 0 5px 5px;"></div>
<span class="t" style="left:108.30px;top:521.00px;font-size:14px;line-height:14px;color:#000;transform:scaleX(0.8541);">Sheet1</span>
<div class="r" style="left:108px;top:536px;width:38px;height:2px;background:#1e7145;"></div>
<div class="r" style="left:156px;top:521px;width:2px;height:17px;background:#4c4c4c;"></div>
<svg class="r" style="left:195.5px;top:523.5px" width="11" height="11" viewBox="0 0 11 11"><path d="M5.5 1 L5.5 10 M1 5.5 L10 5.5" fill="none" stroke="#e0e0e0" stroke-width="1.2" stroke-linecap="round" stroke-linejoin="round" /></svg>
<svg class="r" style="left:434px;top:523px" width="5" height="13" viewBox="0 0 5 13"><circle cx="2.4" cy="3.2000000000000455" r="1.1" fill="#e0e0e0"/><circle cx="2.4" cy="7" r="1.1" fill="#e0e0e0"/><circle cx="2.4" cy="10.799999999999955" r="1.1" fill="#e0e0e0"/></svg>
<div class="r" style="left:451px;top:522px;width:254px;height:15px;background:#1c1c1c;border-radius:7.5px;"></div>
<svg class="r" style="left:455px;top:525px" width="7" height="9" viewBox="0 0 7 9"><path d="M6.5 0.5 L6.5 8.5 L0.5 4.5 Z" fill="#b0b0b0"/></svg>
<svg class="r" style="left:694px;top:525px" width="7" height="9" viewBox="0 0 7 9"><path d="M0.5 0.5 L0.5 8.5 L6.5 4.5 Z" fill="#b0b0b0"/></svg>
<div class="r" style="left:467px;top:525px;width:195px;height:8px;background:#9f9f9f;border-radius:4px;"></div>
<div class="r" style="left:0px;top:544px;width:720px;height:19px;background:#1c1c1c;"></div>
<span class="t" style="left:10.00px;top:548.70px;font-size:10.6px;line-height:10.6px;color:#ffffff;transform:scaleX(0.8455);">Ready</span>
<svg class="r" style="left:52px;top:548px" width="15" height="13" viewBox="0 0 15 13"><rect x="1" y="1.2" width="12.6" height="10.6" rx="0.6" fill="none" stroke="#ececec" stroke-width="1.3"/><path d="M1 4 L13.6 4" stroke="#ececec" stroke-width="1.2"/><circle cx="10" cy="8.8" r="3.3" fill="#1c1c1c" stroke="#ececec" stroke-width="1.3"/><circle cx="10" cy="8.8" r="1.3" fill="#ececec"/></svg>
<svg class="r" style="left:80px;top:547px" width="16" height="15" viewBox="0 0 16 15"><circle cx="6.8" cy="2.6" r="1.7" fill="none" stroke="#ececec" stroke-width="1.2"/><path d="M1.4 5 L5 6.2 L8.6 6.2 L12.2 5 M5.2 6.4 L5 9.6 L3 13.6 M8.4 6.4 L8.6 9" fill="none" stroke="#ececec" stroke-width="1.25" stroke-linecap="round" stroke-linejoin="round" /><path d="M7.6 11.4 L9.8 13.6 L14 9" fill="none" stroke="#ececec" stroke-width="1.3" stroke-linecap="round" stroke-linejoin="round" /></svg>
<span class="t" style="left:97.80px;top:548.70px;font-size:10.6px;line-height:10.6px;color:#ffffff;transform:scaleX(0.8799);">Accessibility: Good to go</span>
<div class="r" style="left:442px;top:544px;width:35px;height:19px;background:#313131;"></div>
<svg class="r" style="left:452px;top:547px" width="13" height="13" viewBox="0 0 13 13"><rect x="1" y="1" width="11" height="11" fill="none" stroke="#f8f8f8" stroke-width="1.35"/><path d="M4.7 1 L4.7 12 M8.3 1 L8.3 12 M1 4.7 L12 4.7 M1 8.3 L12 8.3" stroke="#f8f8f8" stroke-width="1.2" fill="none"/></svg>
<svg class="r" style="left:488px;top:547px" width="14" height="13" viewBox="0 0 14 13"><rect x="1" y="1" width="12" height="11" fill="none" stroke="#f4f4f4" stroke-width="1.35"/><rect x="3.8" y="3.6" width="6.4" height="5.8" fill="none" stroke="#f4f4f4" stroke-width="1.2"/><path d="M5.4 5.6 L8.6 5.6 M5.4 7.4 L8.6 7.4" stroke="#f4f4f4" stroke-width="0.7"/></svg>
<svg class="r" style="left:525px;top:547px" width="14" height="13" viewBox="0 0 14 13"><rect x="1" y="1" width="12" height="11" fill="none" stroke="#f4f4f4" stroke-width="1.35"/><path d="M4.5 1 L4.5 6.5 L9.5 6.5 L9.5 1" fill="none" stroke="#f4f4f4" stroke-width="1.35"/></svg>
<div class="r" style="left:556px;top:554px;width:7px;height:1px;background:#9a9a9a;"></div>
<div class="r" style="left:568px;top:554px;width:90px;height:1px;background:#b0b0b0;"></div>
<div class="r" style="left:610px;top:549px;width:5px;height:11px;background:#c8c8c8;"></div>
<div class="r" style="left:663px;top:554px;width:7px;height:1px;background:#9a9a9a;"></div>
<div class="r" style="left:666px;top:551px;width:1px;height:7px;background:#9a9a9a;"></div>
<span class="t" style="left:681.80px;top:548.70px;font-size:10.6px;line-height:10.6px;color:#ffffff;transform:scaleX(0.8700);">100%</span>
</body></html>
